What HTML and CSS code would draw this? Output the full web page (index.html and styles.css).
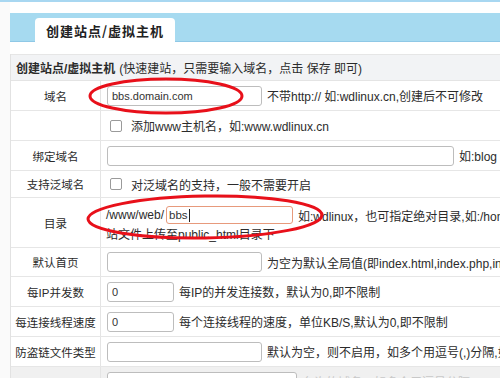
FILE: index.html
```html
<!DOCTYPE html>
<html lang="zh-CN">
<head>
<meta charset="utf-8">
<title>创建站点/虚拟主机</title>
<link rel="stylesheet" href="styles.css">
</head>
<body>
<div class="topline"></div>
<div class="wrap">
  <div class="tabbar"><div class="tab">创建站点/虚拟主机</div></div>
  <div class="table">
    <div class="caption"><b>创建站点/虚拟主机</b> (快速建站，只需要输入域名，点击 保存 即可)</div>
    <div class="row h30">
      <div class="lab">域名</div>
      <div class="val"><span class="inp w155">bbs.domain.com</span><span class="tip">不带http:// 如:wdlinux.cn,创建后不可修改</span></div>
    </div>
    <div class="row h30">
      <div class="lab"></div>
      <div class="val"><span class="chk"></span><span class="tip">添加www主机名，如:www.wdlinux.cn</span></div>
    </div>
    <div class="row h30">
      <div class="lab">绑定域名</div>
      <div class="val"><span class="inp w347"></span><span class="tip">如:blog</span></div>
    </div>
    <div class="row h27">
      <div class="lab">支持泛域名</div>
      <div class="val"><span class="chk"></span><span class="tip">对泛域名的支持，一般不需要开启</span></div>
    </div>
    <div class="row h50">
      <div class="lab">目录</div>
      <div class="val col">
        <div class="line"><span class="pre">/www/web/</span><span class="inp w127 focus">bbs<span class="caret"></span></span><span class="tip">如:wdlinux，也可指定绝对目录,如:/home/wwwroot/wdlinux，网</span></div>
        <div class="line2">站文件上传至public_html目录下</div>
      </div>
    </div>
    <div class="row h29">
      <div class="lab">默认首页</div>
      <div class="val"><span class="inp w155"></span><span class="tip">为空为默认全局值(即index.html,index.php,index.htm)</span></div>
    </div>
    <div class="row h30">
      <div class="lab">每IP并发数</div>
      <div class="val"><span class="inp w67">0</span><span class="tip">每IP的并发连接数，默认为0,即不限制</span></div>
    </div>
    <div class="row h30">
      <div class="lab">每连接线程速度</div>
      <div class="val"><span class="inp w67">0</span><span class="tip">每个连接线程的速度，单位KB/S,默认为0,即不限制</span></div>
    </div>
    <div class="row h30">
      <div class="lab">防盗链文件类型</div>
      <div class="val"><span class="inp w155"></span><span class="tip">默认为空，则不启用，如多个用逗号(,)分隔,如jpg,gif</span></div>
    </div>
    <div class="row h30 gray">
      <div class="lab"></div>
      <div class="val"><span class="inp w190"></span><span class="tip faint">允许的域名，如多个用逗号分隔</span></div>
    </div>
  </div>
</div>
<svg class="marks" width="500" height="378" viewBox="0 0 500 378">
  <ellipse cx="166" cy="96" rx="76" ry="17" fill="none" stroke="#e8101a" stroke-width="3"/>
  <ellipse cx="205" cy="217" rx="117" ry="21" fill="none" stroke="#e8101a" stroke-width="3" transform="rotate(-1 205 217)"/>
</svg>
</body>
</html>
```
FILE: styles.css
```css
html, body {
  margin: 0;
  padding: 0;
}
body {
  width: 500px;
  height: 378px;
  overflow: hidden;
  background: #fafafa;
  font-family: "Liberation Sans", "Noto Sans CJK SC", sans-serif;
  font-size: 12px;
  color: #2b2b2b;
  position: relative;
}
.topline {
  height: 2px;
  background: #a8d7f1;
}
.wrap {
  margin-left: 10px;
  padding-top: 11px;
  background: #fff;
  width: 490px;
}
.tabbar {
  height: 28px;
  background: #a6daf0;
  border-bottom: 1px solid #8fc8e6;
  display: flex;
  align-items: flex-end;
}
.tab {
  margin-left: 25px;
  width: 140px;
  height: 24px;
  background: #fff;
  border-radius: 4px 4px 0 0;
  font-family: "Noto Sans CJK SC", sans-serif;
  font-weight: bold;
  font-size: 13px;
  letter-spacing: 1px;
  color: #222;
  display: flex;
  align-items: center;
  justify-content: center;
  margin-bottom: -1px;
}
.table {
  margin-top: 12px;
  border-left: 1px solid #e2e2e2;
}
.caption {
  height: 27px;
  background: #f2f3f5;
  border-top: 1px solid #e6e6e6;
  border-bottom: 1px solid #e4e4e4;
  box-sizing: border-box;
  display: flex;
  align-items: center;
  padding-left: 5px;
  white-space: nowrap;
}
.caption b {
  margin-right: 4px;
}
.row {
  display: grid;
  grid-template-columns: 90px 1fr;
  border-bottom: 1px solid #e6e6e6;
  box-sizing: border-box;
}
.h27 { height: 27px; }
.h29 { height: 29px; }
.h30 { height: 30px; }
.h50 { height: 50px; }
.lab {
  border-right: 1px solid #e4e4e4;
  display: flex;
  align-items: center;
  justify-content: center;
  font-size: 11.5px;
  white-space: nowrap;
}
.val {
  display: flex;
  align-items: center;
  padding-left: 6px;
  white-space: nowrap;
  min-width: 0;
}
.val.col {
  flex-direction: column;
  align-items: flex-start;
  justify-content: flex-start;
  padding-top: 8px;
  padding-left: 5px;
}
.line {
  display: flex;
  align-items: center;
  height: 18px;
}
.line2 {
  margin-top: 1px;
}
.inp {
  display: inline-flex;
  align-items: center;
  box-sizing: border-box;
  height: 20px;
  border: 1px solid #bdbdbd;
  border-radius: 3px;
  background: #fff;
  padding-left: 4px;
  color: #333;
  font-size: 11px;
  flex: none;
}
.inp.focus {
  height: 18px;
  border-color: #e79a7c;
  padding-left: 2px;
  font-size: 11.5px;
}
.caret {
  display: inline-block;
  width: 1px;
  height: 13px;
  background: #222;
  margin-left: 1px;
}
.w155 { width: 155px; }
.w347 { width: 347px; }
.w127 { width: 127px; }
.w67 { width: 67px; }
.w190 { width: 190px; }
.pre {
  margin-right: 2px;
}
.tip {
  margin-left: 5px;
}
.chk {
  display: inline-block;
  width: 10px;
  height: 10px;
  border: 1px solid #9a9a9a;
  border-radius: 2px;
  background: #fff;
  margin-left: 3px;
  margin-right: 4px;
  flex: none;
}
.gray .lab, .gray .val {
  background: #f0f0f0;
}
.faint {
  color: #c8c8c8;
}
.marks {
  position: absolute;
  left: 0;
  top: 0;
  pointer-events: none;
}
```
